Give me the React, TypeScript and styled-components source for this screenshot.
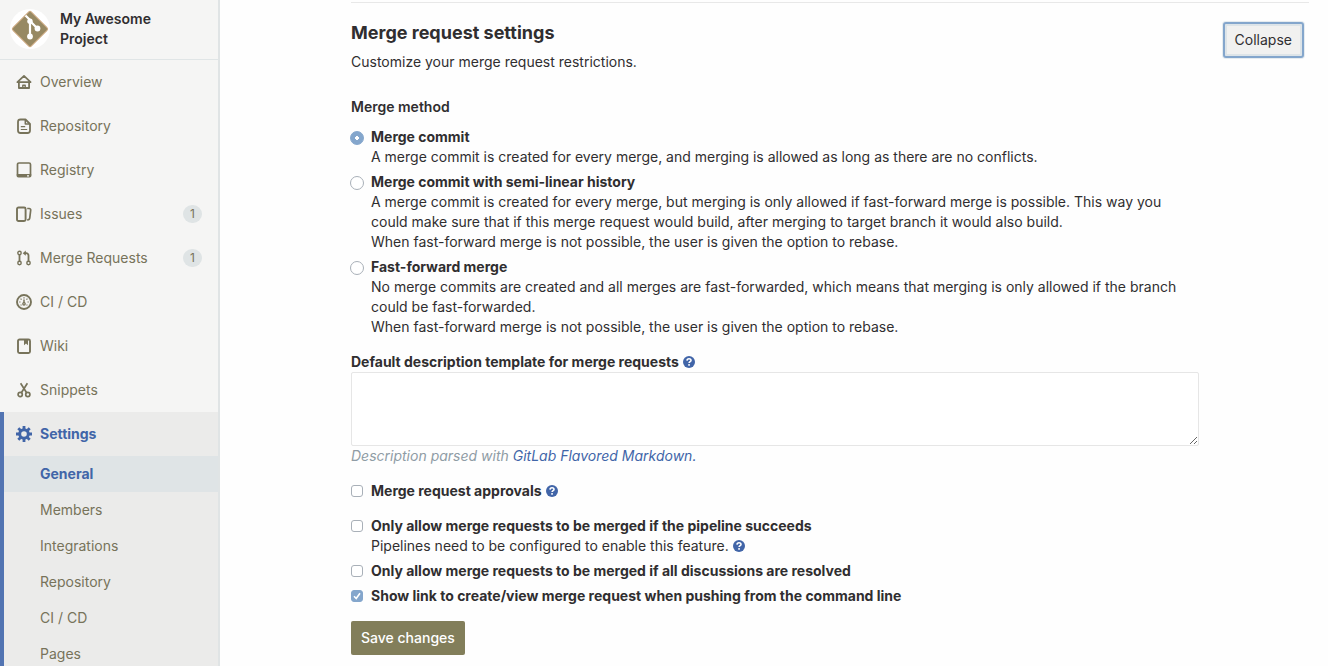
import React, { useState } from "react";
import styled, { createGlobalStyle, css } from "styled-components";

const GlobalStyle = createGlobalStyle`
  *, *::before, *::after { box-sizing: border-box; }
  body {
    margin: 0;
    background: #fefefe;
    color: #302e30;
    font-family: Inter, "Liberation Sans", sans-serif;
    font-size: 14px;
    line-height: 20px;
  }
`;

const Page = styled.div`
  display: flex;
  height: 100vh;
`;

const Sidebar = styled.aside`
  flex: 0 0 220px;
  overflow: hidden;
  background: #f5f5f4;
  border-right: 2px solid #e0e4e5;
`;

const ProjectHeader = styled.a`
  display: flex;
  align-items: center;
  gap: 10px;
  height: 60px;
  padding: 0 50px 2px 10px;
  border-bottom: 1px solid #e0e5e6;
  color: #302e30;
  font-weight: 600;
  text-decoration: none;
`;

const Avatar = styled.svg`
  flex: none;
  width: 40px;
  height: 40px;
`;

const NavList = styled.ul`
  margin: 0;
  padding: 0;
  list-style: none;
`;

const NavLink = styled.a<{ $active?: boolean }>`
  display: flex;
  align-items: center;
  gap: 8px;
  height: 44px;
  padding: 0 16px;
  color: #77735a;
  text-decoration: none;
  ${(p) =>
    p.$active &&
    css`
      padding-left: 12px;
      color: #4165a8;
      font-weight: 700;
    `}
`;

const NavIcon = styled.svg`
  flex: none;
  width: 16px;
  height: 16px;
  fill: none;
  stroke: currentColor;
  stroke-width: 2;
  stroke-linejoin: round;
`;

const Badge = styled.span`
  margin-left: auto;
  padding: 0 7px;
  border-radius: 10px;
  background: #dfe4e5;
  font-size: 12px;
  line-height: 18px;
`;

const ActiveGroup = styled.li`
  border-left: 4px solid #5274b2;
  background: #ebebea;
`;

const SubLink = styled.a<{ $active?: boolean }>`
  display: flex;
  align-items: center;
  height: 36px;
  padding-left: 36px;
  color: ${(p) => (p.$active ? "#4165a8" : "#77735a")};
  background: ${(p) => (p.$active ? "#dfe4e6" : "transparent")};
  font-weight: ${(p) => (p.$active ? 700 : 400)};
  text-decoration: none;
`;

const Main = styled.main`
  flex: 1;
  min-width: 0;
  padding: 2px 19px 0 131px;
`;

const Section = styled.section`
  border-top: 1px solid #e8e8e8;
`;

const SectionHeader = styled.header`
  display: flex;
  justify-content: space-between;
  align-items: flex-start;
  padding: 19px 5px 0 0;
`;

const Title = styled.h4`
  margin: 0;
  font-size: 18px;
  font-weight: 700;
  line-height: 22px;
`;

const Lead = styled.p`
  margin: 8px 0 0;
`;

const CollapseButton = styled.button`
  height: 36px;
  padding: 0 10px;
  border: 2px solid #84a6cc;
  border-radius: 3px;
  background: #f1f1f0;
  box-shadow: inset 0 0 0 2px #dde4e8, 0 0 0 1px #e6ecf0;
  color: inherit;
  font: inherit;
`;

const Form = styled.form`
  padding: 25px 110px 0 0;
`;

const Group = styled.fieldset`
  margin: 0 0 15px;
  padding: 0;
  border: 0;
`;

const Legend = styled.legend`
  margin-bottom: 10px;
  padding: 0;
  font-weight: 600;
`;

const Choice = styled.div`
  display: grid;
  grid-template-columns: 14px 1fr;
  column-gap: 6px;
  & + & {
    margin-top: 5px;
  }
`;

const ChoiceBody = styled.div``;

const Strong = styled.label`
  font-weight: 700;
`;

const Text = styled.p`
  margin: 0;
`;

const Radio = styled.input`
  appearance: none;
  width: 14px;
  height: 14px;
  margin: 4px 0 0 -1px;
  border: 1px solid #a9b0b8;
  border-radius: 50%;
  background: #fff;
  &:checked {
    border-color: #84a6cc;
    background: radial-gradient(circle, #fff 0 2px, #84a6cc 2px);
  }
`;

const CheckCell = styled.span`
  display: grid;
  width: 12px;
  height: 12px;
  margin-top: 4px;
  & > * {
    grid-area: 1 / 1;
  }
`;

const CheckInput = styled.input`
  appearance: none;
  width: 12px;
  height: 12px;
  margin: 0;
  border: 1px solid #a9b0b8;
  border-radius: 3px;
  background: #fff;
  &:checked {
    border-color: #84a6cc;
    background: #84a6cc;
  }
`;

const Tick = styled.svg`
  width: 12px;
  height: 12px;
  pointer-events: none;
`;

const HelpLink = styled.a`
  display: inline-block;
  width: 12px;
  height: 12px;
  margin-left: 4px;
  vertical-align: -1px;
  color: #4165a8;
  line-height: 0;
`;

const TextArea = styled.textarea`
  display: block;
  width: 100%;
  height: 74px;
  padding: 6px 10px;
  border: 1px solid #e6e6e6;
  border-radius: 2px;
  background: #fff;
  font: inherit;
  resize: vertical;
  outline: none;
`;

const Hint = styled.p`
  margin: 0;
  color: #8f9ca5;
  font-style: italic;
  & a {
    color: #4165a8;
    text-decoration: none;
  }
`;

const SaveButton = styled.button`
  display: block;
  height: 34px;
  padding: 0 10px;
  border: 0;
  border-radius: 2px;
  background: #827e5a;
  color: #fff;
  font: inherit;
  font-weight: 500;
`;

const Help = () => (
  <HelpLink href="#help" aria-label="Help">
    <svg width="12" height="12" viewBox="0 0 12 12" aria-hidden="true">
      <circle cx="6" cy="6" r="6" fill="currentColor" />
      <path d="M4 4.6C4.1 2.2 8 2.2 8 4.4C8 5.7 6.1 5.7 6.1 7.1" fill="none" stroke="#fff" strokeWidth="1.6" />
      <rect x="5.2" y="8.1" width="1.7" height="1.6" fill="#fff" />
    </svg>
  </HelpLink>
);

const icons: Record<string, React.ReactNode> = {
  home: (
    <>
      <path d="M1.4 8.2 8 1.8l6.6 6.4z" strokeWidth="1.7" />
      <path d="M2.9 8v6h10.2V8" strokeWidth="1.8" />
      <path d="M6.8 14v-2.8h2.4V14" strokeWidth="1.4" />
    </>
  ),
  doc: (
    <>
      <path d="M9.5 1.5H4.5a2.5 2.5 0 0 0-2.5 2.5v8.5A2.5 2.5 0 0 0 4.5 15h7a2.5 2.5 0 0 0 2.5-2.5V6z" strokeWidth="1.8" />
      <path d="M9.3 1.5V6H14" strokeWidth="1.5" />
      <path d="M4.8 8.7h4.4M4.8 11.5h6.4" strokeWidth="1.2" />
    </>
  ),
  disk: (
    <>
      <path d="M1.5 12V2.5a1.5 1.5 0 0 1 1.5-1.5h10a1.5 1.5 0 0 1 1.5 1.5V12" strokeWidth="1.7" />
      <path fillRule="evenodd" d="M.5 12h15v1.500a2 2 0 0 1-2 2h-11a2 2 0 0 1-2-2zM11 13.200v1.200h2v-1.200z" fill="currentColor" stroke="none" />
    </>
  ),
  issues: (
    <>
      <rect x="1" y="1.5" width="8.6" height="13.5" rx="1.5" strokeWidth="1.9" />
      <path d="M11.2 2.5h2a1.5 1.5 0 0 1 1.5 1.7l-.9 7.5a2.3 2.3 0 0 1-2.3 2.1h-.3" strokeWidth="1.7" />
    </>
  ),
  merge: (
    <g strokeWidth="1.4">
      <circle cx="3.5" cy="3" r="1.7" />
      <circle cx="3.5" cy="13" r="1.7" />
      <circle cx="12.5" cy="13" r="1.7" />
      <path d="M3.5 4.7v6.6M12.5 11.3V5.5a2.3 2.3 0 0 0-2.3-2.3H8.5" strokeWidth="1.8" />
      <path d="M9.8.6v5.2L6.7 3.2z" fill="currentColor" stroke="none" />
    </g>
  ),
  gauge: (
    <>
      <circle cx="8" cy="8" r="7" strokeWidth="1.9" />
      <path d="M8 3.200v1.300M3.200 8h1.300M11.500 8h1.300M4.600 4.700l.9.900M11.400 4.700l-.9.900M4.700 11.300l.7-.7M11.300 11.300l-.7-.7" strokeWidth="1.200" />
      <path d="M8 5.4v3.5" strokeWidth="1.5" />
      <circle cx="8" cy="9.8" r="1.2" strokeWidth="1.3" />
    </>
  ),
  book: (
    <>
      <rect x="2" y="1.5" width="12" height="13.5" rx="1.5" strokeWidth="1.9" />
      <path d="M8 1.5h4v5.7l-2-1.7-2 1.7z" fill="currentColor" stroke="none" />
    </>
  ),
  snippet: (
    <>
      <path d="M4.6 1.2 10.8 11M11.4 1.2 5.2 11" strokeWidth="1.7" />
      <circle cx="4.2" cy="12.5" r="2.1" strokeWidth="1.7" />
      <circle cx="11.8" cy="12.5" r="2.1" strokeWidth="1.7" />
    </>
  ),
  gear: (
    <>
      <circle cx="8" cy="8" r="4.3" strokeWidth="3" />
      <path d="M8 0v3.5M8 12.5V16M0 8h3.5M12.5 8H16M2.3 2.3l2.5 2.5M11.2 11.2l2.5 2.5M2.3 13.7l2.5-2.5M11.2 4.8l2.5-2.5" strokeWidth="2.8" />
    </>
  ),
};

const Icon = ({ name }: { name: string }) => (
  <NavIcon viewBox="0 0 16 16" aria-hidden="true">
    {icons[name]}
  </NavIcon>
);

const navItems: { icon: string; label: string; count?: number }[] = [
  { icon: "home", label: "Overview" },
  { icon: "doc", label: "Repository" },
  { icon: "disk", label: "Registry" },
  { icon: "issues", label: "Issues", count: 1 },
  { icon: "merge", label: "Merge Requests", count: 1 },
  { icon: "gauge", label: "CI / CD" },
  { icon: "book", label: "Wiki" },
  { icon: "snippet", label: "Snippets" },
];

const settingsItems = ["General", "Members", "Integrations", "Repository", "CI / CD", "Pages"];

const methods = [
  {
    id: "merge",
    label: "Merge commit",
    text: ["A merge commit is created for every merge, and merging is allowed as long as there are no conflicts."],
  },
  {
    id: "semi-linear",
    label: "Merge commit with semi-linear history",
    text: [
      "A merge commit is created for every merge, but merging is only allowed if fast-forward merge is possible. This way you could make sure that if this merge request would build, after merging to target branch it would also build.",
      "When fast-forward merge is not possible, the user is given the option to rebase.",
    ],
  },
  {
    id: "ff",
    label: "Fast-forward merge",
    text: [
      "No merge commits are created and all merges are fast-forwarded, which means that merging is only allowed if the branch could be fast-forwarded.",
      "When fast-forward merge is not possible, the user is given the option to rebase.",
    ],
  },
];

interface CheckProps {
  id: string;
  label: string;
  initial?: boolean;
  help?: boolean;
  children?: React.ReactNode;
}

const CheckOption = ({ id, label, initial = false, help, children }: CheckProps) => {
  const [checked, setChecked] = useState(initial);
  return (
    <Choice>
      <CheckCell>
        <CheckInput type="checkbox" id={id} checked={checked} onChange={() => setChecked(!checked)} />
        {checked && (
          <Tick viewBox="0 0 12 12" aria-hidden="true">
            <path d="M3 6.3 5.2 8.5 9 3.3" fill="none" stroke="#fff" strokeWidth="1.6" />
          </Tick>
        )}
      </CheckCell>
      <ChoiceBody>
        <Strong htmlFor={id}>{label}</Strong>
        {help && <Help />}
        {children}
      </ChoiceBody>
    </Choice>
  );
};

export default function App() {
  const [method, setMethod] = useState("merge");
  return (
    <Page>
      <GlobalStyle />
      <Sidebar>
        <ProjectHeader href="#project">
          <Avatar viewBox="0 0 40 40" aria-hidden="true">
            <circle cx="20" cy="20" r="20" fill="#fff" />
            <rect x="7" y="7" width="26" height="26" rx="2" transform="rotate(45 20 20)" fill="#978963" stroke="#cda980" />
            <path d="M15.5 6.5 20 11v17M20 12l7.5 7.5" fill="none" stroke="#fff" strokeWidth="2.2" />
            <circle cx="20" cy="12.3" r="2.7" fill="#fff" />
            <circle cx="20" cy="27.5" r="2.9" fill="#fff" />
            <circle cx="27.5" cy="19.5" r="2.9" fill="#fff" />
          </Avatar>
          My Awesome Project
        </ProjectHeader>
        <nav aria-label="Project">
          <NavList>
            {navItems.map((item) => (
              <li key={item.label}>
                <NavLink href="#nav">
                  <Icon name={item.icon} />
                  {item.label}
                  {item.count !== undefined && <Badge>{item.count}</Badge>}
                </NavLink>
              </li>
            ))}
            <ActiveGroup>
              <NavLink href="#settings" $active>
                <Icon name="gear" />
                Settings
              </NavLink>
              <NavList>
                {settingsItems.map((label, i) => (
                  <li key={label}>
                    <SubLink href="#settings" $active={i === 0}>
                      {label}
                    </SubLink>
                  </li>
                ))}
              </NavList>
            </ActiveGroup>
          </NavList>
        </nav>
      </Sidebar>
      <Main>
        <Section>
          <SectionHeader>
            <div>
              <Title>Merge request settings</Title>
              <Lead>Customize your merge request restrictions.</Lead>
            </div>
            <CollapseButton type="button">Collapse</CollapseButton>
          </SectionHeader>
          <Form onSubmit={(e) => e.preventDefault()}>
            <Group>
              <Legend>Merge method</Legend>
              {methods.map((m) => (
                <Choice key={m.id}>
                  <Radio
                    type="radio"
                    name="merge_method"
                    id={m.id}
                    checked={method === m.id}
                    onChange={() => setMethod(m.id)}
                  />
                  <ChoiceBody>
                    <Strong htmlFor={m.id}>{m.label}</Strong>
                    {m.text.map((line) => (
                      <Text key={line}>{line}</Text>
                    ))}
                  </ChoiceBody>
                </Choice>
              ))}
            </Group>
            <Group>
              <Strong htmlFor="template">Default description template for merge requests</Strong>
              <Help />
              <TextArea id="template" />
              <Hint>
                Description parsed with <a href="#markdown">GitLab Flavored Markdown.</a>
              </Hint>
            </Group>
            <Group>
              <CheckOption id="approvals" label="Merge request approvals" help />
            </Group>
            <Group>
              <CheckOption id="pipeline" label="Only allow merge requests to be merged if the pipeline succeeds">
                <Text>
                  Pipelines need to be configured to enable this feature.
                  <Help />
                </Text>
              </CheckOption>
              <CheckOption id="discussions" label="Only allow merge requests to be merged if all discussions are resolved" />
              <CheckOption
                id="push-link"
                label="Show link to create/view merge request when pushing from the command line"
                initial
              />
            </Group>
            <SaveButton type="submit">Save changes</SaveButton>
          </Form>
        </Section>
      </Main>
    </Page>
  );
}
